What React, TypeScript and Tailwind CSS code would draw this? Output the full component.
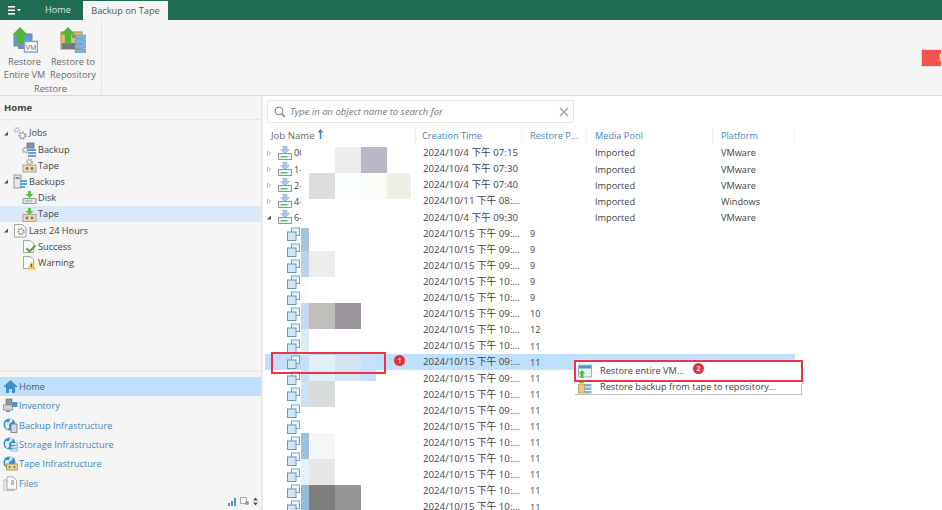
import React from "react";

const font = { fontFamily: '"Open Sans","Noto Sans CJK TC",sans-serif' };

function Gear({ x, y, r, c = "#9a9a9a" }: { x: number; y: number; r: number; c?: string }) {
  return <circle cx={x} cy={y} r={r} fill="none" stroke={c} strokeWidth={r * 0.8} strokeDasharray={`${r * 0.55} ${r * 0.35}`} />;
}

function TapeBox({ x = 1, y = 7 }: { x?: number; y?: number }) {
  return (
    <g>
      <rect x={x} y={y} width="13" height="7" fill="#f0d9a0" stroke="#a5a5a5" strokeWidth="1" />
      <circle cx={x + 4} cy={y + 3.5} r="1.4" fill="#777" />
      <circle cx={x + 9} cy={y + 3.5} r="1.4" fill="#777" />
    </g>
  );
}

function DownArrow({ x = 7.5 }: { x?: number }) {
  return <path d={`M${x - 1.5} 1h3v3h2.5l-4 4-4-4h2.5z`} fill="#5cc042" />;
}

function TreeIcon({ kind }: { kind: string }) {
  return (
    <svg width="15" height="15" viewBox="0 0 15 15" className="shrink-0">
      {kind === "jobs" && (
        <g>
          <Gear x={4} y={4} r={2.2} c="#b5b5b5" />
          <Gear x={9.5} y={9.5} r={3} c="#9c9c9c" />
        </g>
      )}
      {kind === "backup" && (
        <g>
          <Gear x={3.5} y={8} r={2.4} />
          <rect x="5" y="1" width="7" height="5" fill="#8393a8" stroke="#66758a" strokeWidth="0.8" />
          <rect x="6" y="7" width="8" height="2" fill="#5da4da" />
          <rect x="6" y="10" width="8" height="2" fill="#5da4da" />
          <rect x="6" y="13" width="8" height="2" fill="#5da4da" />
        </g>
      )}
      {kind === "tapejob" && (
        <g>
          <Gear x={7.5} y={4} r={2.4} />
          <TapeBox />
        </g>
      )}
      {kind === "backups" && (
        <g>
          <rect x="1" y="1" width="7" height="13" fill="#e7e7e7" stroke="#9a9a9a" strokeWidth="1" />
          <rect x="2.5" y="3" width="4" height="2" fill="#6d8fb3" />
          <rect x="7" y="6" width="7" height="2" fill="#5da4da" />
          <rect x="7" y="9" width="7" height="2" fill="#5da4da" />
          <rect x="7" y="12" width="5" height="2" fill="#5da4da" />
        </g>
      )}
      {kind === "disk" && (
        <g>
          <DownArrow />
          <rect x="1" y="8.5" width="13" height="5" fill="#dceaf2" stroke="#9a9a9a" strokeWidth="1" />
          <rect x="3" y="10.5" width="7" height="1" fill="#6bb88f" />
        </g>
      )}
      {kind === "tape" && (
        <g>
          <DownArrow />
          <TapeBox y={7.5} />
        </g>
      )}
      {kind === "last" && (
        <g>
          <path d="M1.5 1.5h8l3.5 3.5v9h-11.5z" fill="#fafafa" stroke="#a5a5a5" strokeWidth="1" />
          <Gear x={8} y={8.5} r={2.7} />
        </g>
      )}
      {kind === "success" && (
        <g>
          <path d="M1.5 1.5h7l3 3v9h-10z" fill="#fafafa" stroke="#a5a5a5" strokeWidth="1" />
          <path d="M4.5 9.5l3 3 6-6" fill="none" stroke="#4eb03a" strokeWidth="2.2" />
        </g>
      )}
      {kind === "warning" && (
        <g>
          <path d="M1.5 1.5h7l3 3v9h-10z" fill="#fafafa" stroke="#a5a5a5" strokeWidth="1" />
          <path d="M9.5 6.5l4.5 8h-9z" fill="#f3c648" />
          <rect x="9" y="9" width="1" height="3" fill="#6d5a1e" />
        </g>
      )}
    </svg>
  );
}

function RowIcon() {
  return (
    <svg width="14" height="14" viewBox="0 0 14 14" className="shrink-0">
      <path d="M5 0h4v3.5h2.5L7 8 2.5 3.5H5z" fill="#a9cbe6" stroke="#8aa9c2" strokeWidth="0.6" />
      <rect x="0.5" y="7.5" width="13" height="6" fill="#eef4f4" stroke="#8f9a9f" strokeWidth="1" />
      <rect x="2.5" y="10" width="7" height="1.4" fill="#5fbd8a" />
    </svg>
  );
}

function ChildIcon() {
  return (
    <svg width="13" height="14" viewBox="0 0 13 14" className="shrink-0">
      <rect x="4.5" y="1" width="8" height="7.5" fill="#eef5fa" stroke="#6ea5cf" strokeWidth="1" />
      <rect x="0.5" y="5" width="8.5" height="8.5" fill="#d3e5f3" stroke="#5d9ac9" strokeWidth="1" />
    </svg>
  );
}

function NavIcon({ kind }: { kind: string }) {
  const globe = (
    <g>
      <circle cx="6.5" cy="6.5" r="6" fill="#3f8fc9" />
      <path d="M2 5c2-2 3 0 4-1s0-3 2-3 2 2 1 3-3 1-3 3 1 3-1 4-3-3-3-6z" fill="#d9ecf8" />
    </g>
  );
  return (
    <svg width="15" height="15" viewBox="0 0 15 15" className="shrink-0">
      {kind === "home" && <path d="M7.5 1L0.5 7.5l1.2 1L3 7.4V14h3v-4h3v4h3V7.4l1.3 1.1 1.2-1z" fill="#3f8fc9" />}
      {kind === "inventory" && (
        <g>
          <rect x="3" y="1" width="6" height="6" fill="#8b97a3" stroke="#6d7884" strokeWidth="0.7" />
          <rect x="0.5" y="7" width="9" height="5" fill="#d4d4d4" stroke="#8a8a8a" strokeWidth="0.8" />
          <rect x="9" y="4" width="5.5" height="5" fill="#4d95cb" />
          <rect x="3" y="12.5" width="4" height="1.5" fill="#8a8a8a" />
        </g>
      )}
      {kind === "backup" && (
        <g>
          {globe}
          <rect x="8" y="6" width="6" height="8.5" fill="#d6d6d6" stroke="#777" strokeWidth="0.8" />
        </g>
      )}
      {kind === "storage" && (
        <g>
          {globe}
          <rect x="8" y="6" width="6.5" height="2" fill="#fff" stroke="#3f8fc9" strokeWidth="0.6" />
          <rect x="8" y="9" width="6.5" height="2" fill="#fff" stroke="#3f8fc9" strokeWidth="0.6" />
          <rect x="8" y="12" width="6.5" height="2" fill="#fff" stroke="#3f8fc9" strokeWidth="0.6" />
        </g>
      )}
      {kind === "tape" && (
        <g>
          {globe}
          <rect x="3.5" y="8" width="11" height="6" fill="#f0d28a" stroke="#a08c55" strokeWidth="0.8" />
          <circle cx="6.5" cy="11" r="1" fill="#6e6e6e" />
          <circle cx="11.5" cy="11" r="1" fill="#6e6e6e" />
        </g>
      )}
      {kind === "files" && (
        <g>
          <path d="M1 4h3v10h7v1h-10z" fill="#f5f5f5" stroke="#a5a5a5" strokeWidth="0.8" />
          <path d="M4 .8h6l3.5 3.5v9h-9.5z" fill="#fafafa" stroke="#a5a5a5" strokeWidth="0.9" />
          <rect x="8" y="4" width="3" height="5" fill="#9cc3e0" />
        </g>
      )}
    </svg>
  );
}

function RestoreVmIcon() {
  return (
    <svg width="26" height="26" viewBox="0 0 26 26">
      <rect x="2" y="7" width="18" height="12" fill="#5b9bd0" stroke="#7d8b96" strokeWidth="1" />
      <rect x="6" y="19" width="8" height="3" fill="#8a8a8a" />
      <path d="M8 0l7.5 7.5H11.2V17H4.8V7.5H.5z" fill="#4fb833" />
      <rect x="12.5" y="14.5" width="13" height="10.5" fill="#fff" stroke="#79a9cf" strokeWidth="1.5" />
      <text x="19" y="22.5" textAnchor="middle" fontSize="7" fill="#555" style={font}>VM</text>
    </svg>
  );
}

function RestoreRepoIcon() {
  return (
    <svg width="26" height="26" viewBox="0 0 26 26">
      <rect x="1" y="5" width="21" height="17" fill="#e8bd6a" stroke="#a08c55" strokeWidth="1" />
      <rect x="2" y="16" width="13" height="6" fill="#777" />
      <rect x="12" y="8" width="9" height="3" fill="#888" />
      <path d="M8 0l7.5 7.5H11.2V17H4.8V7.5H.5z" fill="#4fb833" />
      <rect x="15" y="8" width="11" height="3.6" fill="#7fb3dd" stroke="#5c97c7" strokeWidth="0.6" />
      <rect x="15" y="12.8" width="11" height="3.6" fill="#7fb3dd" stroke="#5c97c7" strokeWidth="0.6" />
      <rect x="15" y="17.6" width="11" height="3.6" fill="#7fb3dd" stroke="#5c97c7" strokeWidth="0.6" />
      <rect x="15" y="22.4" width="11" height="3.2" fill="#7fb3dd" stroke="#5c97c7" strokeWidth="0.6" />
    </svg>
  );
}

const tree = [
  { t: "Jobs", k: "jobs", top: true },
  { t: "Backup", k: "backup" },
  { t: "Tape", k: "tapejob" },
  { t: "Backups", k: "backups", top: true },
  { t: "Disk", k: "disk" },
  { t: "Tape", k: "tape", sel: true },
  { t: "Last 24 Hours", k: "last", top: true },
  { t: "Success", k: "success" },
  { t: "Warning", k: "warning" },
];

const nav = [
  { t: "Home", k: "home" },
  { t: "Inventory", k: "inventory" },
  { t: "Backup Infrastructure", k: "backup" },
  { t: "Storage Infrastructure", k: "storage" },
  { t: "Tape Infrastructure", k: "tape" },
  { t: "Files", k: "files" },
];

const parents = [
  { n: "00", d: "2024/10/4 下午 07:15", m: "VMware" },
  { n: "1-", d: "2024/10/4 下午 07:30", m: "VMware" },
  { n: "2-", d: "2024/10/4 下午 07:40", m: "VMware" },
  { n: "4-", d: "2024/10/11 下午 08:...", m: "Windows" },
  { n: "6-", d: "2024/10/4 下午 09:30", m: "VMware", open: true },
];

const children: [string, string][] = [
  ["09", "9"], ["09", "9"], ["09", "9"], ["10", "9"], ["10", "9"], ["09", "10"], ["10", "12"], ["10", "11"],
  ["09", "11"], ["09", "11"], ["10", "11"], ["09", "11"], ["10", "11"], ["10", "11"], ["10", "11"], ["10", "11"], ["10", "11"], ["10", "11"],
];

const patches = [
  { c: "bg-white", l: 301, t: 146, w: 112, h: 79 },
  { c: "bg-[#ececec]", l: 335, t: 147, w: 26, h: 26 },
  { c: "bg-[#bbb8c6]", l: 361, t: 147, w: 26, h: 26 },
  { c: "bg-[#dcdddc]", l: 309, t: 173, w: 26, h: 26 },
  { c: "bg-[#fbfefe]", l: 335, t: 173, w: 26, h: 26 },
  { c: "bg-[#fafcf7]", l: 361, t: 173, w: 26, h: 26 },
  { c: "bg-[#eef0e6]", l: 387, t: 173, w: 24, h: 26 },
  { c: "bg-[#a9c3d6]", l: 301, t: 228, w: 8, h: 23 },
  { c: "bg-[#b8d2ea]", l: 301, t: 251, w: 8, h: 26 },
  { c: "bg-[#ececeb]", l: 309, t: 251, w: 26, h: 26 },
  { c: "bg-[#fbfcff]", l: 301, t: 277, w: 8, h: 26 },
  { c: "bg-[#c5d8f3]", l: 301, t: 303, w: 8, h: 26 },
  { c: "bg-[#c0bfbc]", l: 309, t: 303, w: 26, h: 26 },
  { c: "bg-[#9b949d]", l: 335, t: 303, w: 26, h: 26 },
  { c: "bg-[#d8ecf2]", l: 301, t: 329, w: 8, h: 26 },
  { c: "bg-[#c6e0f8]", l: 301, t: 355, w: 8, h: 26 },
  { c: "bg-[#e3effa]", l: 309, t: 355, w: 26, h: 26 },
  { c: "bg-[#d5e4f3]", l: 335, t: 355, w: 26, h: 26 },
  { c: "bg-[#c9e0fb]", l: 361, t: 355, w: 15, h: 26 },
  { c: "bg-[#c9e2f5]", l: 301, t: 381, w: 8, h: 26 },
  { c: "bg-[#d9dcdc]", l: 309, t: 381, w: 26, h: 26 },
  { c: "bg-white", l: 301, t: 407, w: 8, h: 26 },
  { c: "bg-[#9dbfdf]", l: 301, t: 433, w: 8, h: 26 },
  { c: "bg-[#f5f6f6]", l: 309, t: 433, w: 26, h: 26 },
  { c: "bg-[#e5f1fb]", l: 301, t: 459, w: 8, h: 26 },
  { c: "bg-[#e8e7e6]", l: 309, t: 459, w: 26, h: 26 },
  { c: "bg-[#92bbdd]", l: 301, t: 485, w: 8, h: 25 },
  { c: "bg-[#7d7f7d]", l: 309, t: 485, w: 26, h: 25 },
  { c: "bg-[#959595]", l: 335, t: 485, w: 26, h: 25 },
];

function Row({ left, date, point, pool, plat, sel }: { left: React.ReactNode; date: string; point?: string; pool?: string; plat?: string; sel?: boolean }) {
  return (
    <div className={`flex h-[16.1px] items-center text-[#3f3f3f] ${sel ? "bg-[#bfdffe]" : ""} w-[530px] ml-[2px]`}>
      <div className="flex w-[158px] shrink-0 items-center overflow-hidden">{left}</div>
      <div className="w-[107px] shrink-0 whitespace-nowrap text-[9.7px]">{date}</div>
      <div className="w-[65px] shrink-0">{point}</div>
      <div className="w-[126px] shrink-0">{pool}</div>
      <div className="w-[74px] shrink-0">{plat}</div>
    </div>
  );
}

export default function App() {
  return (
    <div className="relative flex h-[510px] w-[942px] flex-col overflow-hidden bg-white text-[9.2px] leading-none" style={font}>
      {/* Title tabs */}
      <div className="flex h-[20px] shrink-0 items-end bg-[#1f6b53]">
        <div className="flex h-full w-[45px] items-center pl-[8px] text-white">
          <svg width="14" height="9" viewBox="0 0 14 9">
            <rect x="0" y="0" width="7" height="1.6" fill="#fff" />
            <rect x="0" y="3.5" width="7" height="1.6" fill="#fff" />
            <rect x="0" y="7" width="7" height="1.6" fill="#fff" />
            <path d="M9 3h4l-2 2.5z" fill="#fff" />
          </svg>
        </div>
        <div className="flex h-full w-[38px] items-center text-[#dcebe5]">Home</div>
        <div className="flex h-[19px] w-[85px] items-center justify-center bg-[#f5f5f5] text-[#555]">Backup on Tape</div>
      </div>

      {/* Ribbon */}
      <div className="relative flex h-[76px] shrink-0 border-b border-[#dcdcdc] bg-[#f5f5f5] text-[#6b6b6b]">
        <div className="flex h-full w-[102px] shrink-0 flex-col border-r border-[#e6e6e6]">
          <div className="flex h-[63px] pt-[7px]">
            <div className="flex w-[49px] flex-col items-center">
              <RestoreVmIcon />
              <div className="mt-[2px] whitespace-nowrap text-center leading-[13px]">Restore<br />Entire VM</div>
            </div>
            <div className="flex w-[48px] flex-col items-center">
              <RestoreRepoIcon />
              <div className="mt-[2px] whitespace-nowrap text-center leading-[13px]">Restore to<br />Repository</div>
            </div>
          </div>
          <div className="mt-[1px] text-center">Restore</div>
        </div>
        <div className="absolute right-0 top-[29px] flex h-[18px] w-[21px] items-center overflow-hidden border border-[#ddd] bg-[#f55350] pl-[17px] text-white">M</div>
      </div>

      {/* Body */}
      <div className="flex min-h-0 flex-1">
        {/* Sidebar */}
        <div className="flex w-[263px] shrink-0 flex-col border-r-2 border-[#e8e8e8] bg-[#f5f5f5]">
          <div className="flex h-[24px] shrink-0 items-center border-b border-[#e6e6e6] pl-[4px] text-[9.5px] font-bold text-[#444]">Home</div>
          <div className="flex flex-1 flex-col pt-[5px] text-[#444]">
            {tree.map((r, i) => (
              <div key={i} className={`flex h-[16.2px] items-center ${r.sel ? "bg-[#d9e9f9]" : ""} ${r.top ? "pl-[3px]" : "pl-[22px]"}`}>
                {r.top && (
                  <svg width="7" height="7" viewBox="0 0 7 7" className="mr-[3px] shrink-0">
                    <path d="M1 5.5h4v-4z" fill="#555" />
                  </svg>
                )}
                <TreeIcon kind={r.k} />
                <span className="ml-[1px]">{r.t}</span>
              </div>
            ))}
          </div>
          <div className="shrink-0 border-t-2 border-[#ebebeb] pt-[5px]">
            {nav.map((n, i) => (
              <div key={n.t} className={`flex h-[19.4px] items-center gap-[1px] pl-[3px] ${i === 0 ? "bg-[#bfdffe] text-[#4a5a68]" : "text-[#4686bb]"}`}>
                <NavIcon kind={n.k} />
                <span>{n.t}</span>
              </div>
            ))}
            <div className="flex h-[17px] items-center justify-end gap-[3px] pr-[3px]">
              <svg width="9" height="9" viewBox="0 0 9 9">
                <path d="M0 9V6h2v3zM3 9V4h2v5zM6 9V1h2v8z" fill="#4b93c9" />
              </svg>
              <svg width="10" height="9" viewBox="0 0 10 9">
                <rect x="0.5" y="0.5" width="6" height="6" fill="#f5f5f5" stroke="#aaa" />
                <circle cx="7" cy="6" r="2" fill="#999" />
              </svg>
              <svg width="5" height="9" viewBox="0 0 5 9">
                <path d="M0 3.5l2.5-3 2.5 3zM0 5.5l2.5 3 2.5-3z" fill="#555" />
              </svg>
            </div>
          </div>
        </div>

        {/* Main */}
        <div className="min-w-0 flex-1 bg-white">
          <div className="ml-[4px] mt-[4px] flex h-[23px] w-[307px] items-center rounded-[2px] border border-[#e6e6e6] pl-[6px] pr-[3px]">
            <svg width="12" height="12" viewBox="0 0 12 12" className="shrink-0">
              <circle cx="5" cy="5" r="3.8" fill="none" stroke="#7a7a7a" strokeWidth="1.1" />
              <path d="M7.8 7.8l3.4 3.4" stroke="#7a7a7a" strokeWidth="1.3" />
            </svg>
            <span className="ml-[4px] flex-1 text-[9.5px] italic text-[#777]">Type in an object name to search for</span>
            <svg width="10" height="10" viewBox="0 0 10 10" className="mr-[1px] shrink-0">
              <path d="M1 1l8 8M9 1l-8 8" stroke="#b5b5b5" strokeWidth="1.8" />
            </svg>
          </div>
          <div className="mt-[5px] ml-[2px] flex h-[16px] w-[530px] items-center text-[#3f85bf]">
            <div className="flex h-full w-[151px] shrink-0 items-center border-r border-[#efefef] pl-[6px] text-[9.6px] text-[#666]">
              Job Name
              <svg width="7" height="11" viewBox="0 0 7 11" className="ml-[2px] mb-[3px]">
                <path d="M3.5 0l3 3.5H4.2V10H2.8V3.5H.5z" fill="#3f85bf" />
              </svg>
            </div>
            <div className="flex h-full w-[106px] shrink-0 items-center border-r border-[#efefef] pl-[6px]">Creation Time</div>
            <div className="flex h-full w-[65px] shrink-0 items-center border-r border-[#efefef] pl-[8px]">Restore P...</div>
            <div className="flex h-full w-[126px] shrink-0 items-center border-r border-[#efefef] pl-[8px]">Media Pool</div>
            <div className="flex h-full w-[82px] shrink-0 items-center border-r border-[#efefef] pl-[8px]">Platform</div>
          </div>
          <div className="mt-[1px]">
            {parents.map((p) => (
              <Row
                key={p.n}
                left={
                  <>
                    <svg width="7" height="7" viewBox="0 0 7 7" className="ml-[1px] mr-[3px] shrink-0">
                      {p.open ? <path d="M1 5.5h4v-4z" fill="#444" /> : <path d="M1.5 1l3.5 2.5-3.5 2.5z" fill="#fff" stroke="#aaa" strokeWidth="0.7" />}
                    </svg>
                    <span className="ml-[2px] flex">
                      <RowIcon />
                    </span>
                    <span className="ml-[2px]">{p.n}</span>
                  </>
                }
                date={p.d}
                pool="Imported"
                plat={p.m}
              />
            ))}
            {children.map(([h, n], i) => (
              <Row
                key={i}
                sel={i === 8}
                left={
                  <span className="ml-[22px] flex">
                    <ChildIcon />
                  </span>
                }
                date={`2024/10/15 下午 ${h}:...`}
                point={n}
              />
            ))}
          </div>
        </div>
      </div>

      {/* Mosaic over the names */}
      {patches.map((p, i) => (
        <div key={i} className={`absolute ${p.c}`} style={{ left: p.l, top: p.t, width: p.w, height: p.h }} />
      ))}

      {/* Context menu */}
      <div className="absolute left-[575px] top-[360px] flex h-[35px] w-[227px] flex-col border-b border-r border-[#bdbdbd] bg-white pt-[1px] text-[#3f3f3f]">
        <div className="flex h-[19px] items-center">
          <span className="ml-[3px] mr-[8px] flex">
            <svg width="14" height="14" viewBox="0 0 14 14">
              <rect x="0.5" y="1" width="13" height="12" fill="#e8f0f6" stroke="#889aa8" strokeWidth="0.8" />
              <rect x="1" y="1.5" width="12" height="3" fill="#4c93c4" />
              <path d="M4 6l3.5 3.5H5.5V14h-3V9.5H.5z" fill="#58bd3e" />
            </svg>
          </span>
          <span>Restore entire VM...</span>
        </div>
        <div className="flex h-[14px] items-center">
          <span className="ml-[3px] mr-[8px] flex">
            <svg width="14" height="14" viewBox="0 0 14 14">
              <rect x="0.5" y="4" width="6" height="9" fill="#e8c88a" stroke="#a08c55" strokeWidth="0.7" />
              <path d="M3.5 0l2.5 3H1z" fill="#58bd3e" />
              <rect x="7" y="4" width="6.5" height="2.5" fill="#7fb3dd" />
              <rect x="7" y="7.5" width="6.5" height="2.5" fill="#7fb3dd" />
              <rect x="7" y="11" width="6.5" height="2.5" fill="#7fb3dd" />
            </svg>
          </span>
          <span>Restore backup from tape to repository...</span>
        </div>
      </div>

      {/* Annotations */}
      <div className="absolute left-[271px] top-[352px] h-[22px] w-[115px] border-2 border-[#ee3344]" />
      <div className="absolute left-[394px] top-[355px] flex h-[11px] w-[11px] items-center justify-center rounded-full bg-[#ee2b3b] text-[7px] font-bold text-white">1</div>
      <div className="absolute left-[574px] top-[360px] h-[22px] w-[229px] border-2 border-[#ee3344]" />
      <div className="absolute left-[693px] top-[363px] flex h-[11px] w-[11px] items-center justify-center rounded-full bg-[#ee2b3b] text-[7px] font-bold text-white">2</div>
    </div>
  );
}
